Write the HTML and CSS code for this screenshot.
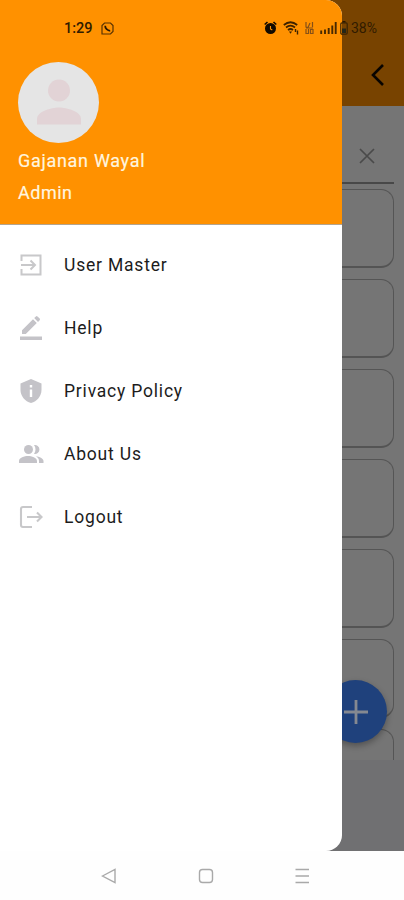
FILE: index.html
```
<!DOCTYPE html>
<html lang="en">
<head>
    <meta charset="UTF-8">
    <meta name="viewport" content="width=device-width, initial-scale=1.0">
    <title>User Master</title>
    <link rel="stylesheet" href="styles.css">
</head>
<body>
<div class="screen">
    <!-- dimmed page behind the drawer -->
    <div class="page">
        <header class="page-header">
            <svg width="16" height="24" viewBox="0 0 16 24"><path d="M13 2L3 12l10 10" fill="none" stroke="#080400" stroke-width="2.6"/></svg>
        </header>
        <div class="search">
            <svg width="16" height="16" viewBox="0 0 16 16"><path d="M1 1l14 14M15 1L1 15" fill="none" stroke="#4a4a4a" stroke-width="1.7"/></svg>
        </div>
        <div class="list">
            <div class="card"></div>
            <div class="card"></div>
            <div class="card"></div>
            <div class="card"></div>
            <div class="card"></div>
            <div class="card"></div>
            <div class="card"></div>
        </div>
        <div class="fab">
            <svg width="24" height="24" viewBox="0 0 24 24"><path d="M12 0v24M0 12h24" stroke="#858991" stroke-width="2.8"/></svg>
        </div>
    </div>

    <aside class="drawer">
        <div class="profile">
            <div class="avatar">
                <svg width="44" height="46" viewBox="0 0 44 46"><circle cx="22" cy="11.500" r="11" fill="#e2d3d6"/><path d="M0 45.500V40c0-7.500 14-11.500 22-11.500S44 32.500 44 40v5.500z" fill="#e2d3d6"/></svg>
            </div>
            <div class="name">Gajanan Wayal</div>
            <div class="role">Admin</div>
        </div>
        <nav class="menu">
            <a class="item">
                <svg class="icon" viewBox="0 0 24 24"><path d="M2.500 8V2.500h19v19h-19V16M2 12h14M11.500 7.500L16 12l-4.500 4.500" fill="none" stroke="#c8c8ca" stroke-width="2"/></svg>
                <span>User Master</span>
            </a>
            <a class="item">
                <svg class="icon" viewBox="0 0 24 24"><path d="M1 20.500h22v3.500H1zM3 14.300L14 3.300l3.800 3.800-11 11H3zM15.200 2.100l1.700-1.700q.8-.7 1.600 0l2.200 2.200q.7.800 0 1.600L19 5.900z"/></svg>
                <span>Help</span>
            </a>
            <a class="item">
                <svg class="icon" viewBox="0 0 24 24"><path d="M12 0L1.500 4.500V11c0 6 4.500 11.500 10.500 13 6-1.500 10.500-7 10.500-13V4.500z"/><path d="M10.800 6h2.400v2.400h-2.400zM10.800 10.500h2.400V18h-2.400z" fill="#fff"/></svg>
                <span>Privacy Policy</span>
            </a>
            <a class="item">
                <svg class="icon" viewBox="0 0 24 24"><circle cx="9.500" cy="7.500" r="4.500"/><path d="M15 3.100a4.500 4.500 0 1 1 0 8.800c2-2.400 2-6.400 0-8.800zM0 21v-2c0-3.300 5.500-5 9-5s9 1.700 9 5v2zM17 14.300c3.300.4 7.500 2 7.500 4.700v2H20v-2c0-2-1.200-3.600-3-4.700z"/></svg>
                <span>About Us</span>
            </a>
            <a class="item">
                <svg class="icon" viewBox="0 0 24 24"><path d="M13 2H4q-2 0-2 2v16q0 2 2 2h9M8 12h14M18 7.500l4.500 4.500-4.500 4.500" fill="none" stroke="#c8c8ca" stroke-width="2.100"/></svg>
                <span>Logout</span>
            </a>
        </nav>
    </aside>

    <div class="status">
        <span class="time">1:29</span>
        <svg class="chat" width="13" height="13" viewBox="0 0 13 13"><path d="M1 12V3.500L3.500 1h6L12 3.500v6L9.500 12z" fill="none" stroke="#593300" stroke-width="1.200"/><path d="M4.200 3.800c-.2 2.500 2.300 5 5 5" fill="none" stroke="#2b1800" stroke-width="1.800"/></svg>
        <svg class="alarm" width="13" height="14" viewBox="0 0 13 14"><circle cx="6.500" cy="7.500" r="5.500" fill="#120a00"/><path d="M.7 3.500L3.500 1M12.300 3.500L9.500 1" stroke="#120a00" stroke-width="1.600"/><path d="M6.500 5v3L8.300 9" fill="none" stroke="#ff9100" stroke-width="1.100"/></svg>
        <svg class="wifi" width="16" height="14" viewBox="0 0 16 14"><path d="M.8 4q6.700-5.500 13.400 0M3 6.500q4.500-3.800 9 0M5 9q2.500-2 5 0" fill="none" stroke="#3c2200" stroke-width="1.700"/><path d="M6 10.500h3l-1.500 2.200z" fill="#3c2200"/><path d="M12.500 8v3M14.500 9.500v4" stroke="#3c2200" stroke-width="1.400"/></svg>
        <svg class="volte" width="9" height="12" viewBox="0 0 9 12"><path d="M1 0v5l2 .5L5 1M7.500 0v5M1 7v4.500h2.500V7M5.500 11.500v-4h2.500v4zM1 6h7" fill="none" stroke="#855017" stroke-width="1.200"/></svg>
        <svg class="signal" width="17" height="12" viewBox="0 0 17 12"><path d="M1.200 12V8.500M5 12V7.500M8.700 12V6M12.300 12V3.500M15.700 12V0" stroke="#472900" stroke-width="1.900"/></svg>
        <svg class="battery" width="8" height="14" viewBox="0 0 8 14"><path d="M2.500 0h3v1.500h-3z" fill="#291700"/><rect x=".8" y="1.800" width="6.400" height="11.400" rx="1.200" fill="none" stroke="#392303" stroke-width="1.200"/><path d="M2 7.500h4V12H2z" fill="#242618"/></svg>
        <span class="percent">38%</span>
    </div>

    <footer class="navbar">
        <svg width="16" height="16" viewBox="0 0 16 16"><path d="M1.500 8L14 1.500v13z"/></svg>
        <svg width="16" height="16" viewBox="0 0 16 16"><rect x="1.500" y="1.500" width="13" height="13" rx="3"/></svg>
        <svg width="16" height="16" viewBox="0 0 16 16"><path d="M1.500 1.500h13.500M1.500 8h13.500M1.500 14.500h13.500"/></svg>
    </footer>
</div>
</body>
</html>
```
FILE: styles.css
```
body {
    margin: 0;
    font-family: Roboto, sans-serif;
    background-color: #fff;
}

.screen {
    position: relative;
    display: flex;
    flex-direction: column;
    width: 404px;
    height: 900px;
    overflow: hidden;
}

.page {
    position: relative;
    height: 851px;
    background-color: #707072;
}

.page-header {
    box-sizing: border-box;
    display: flex;
    justify-content: flex-end;
    height: 106px;
    padding: 63px 18px 0 0;
    background-color: #784300;
}

.search {
    box-sizing: border-box;
    display: flex;
    justify-content: flex-end;
    height: 83px;
    padding: 42px 29px 0 0;
    background: linear-gradient(#484848, #484848) 0 76px / 394px 2px no-repeat #757575;
}

.list {
    box-sizing: border-box;
    display: flex;
    flex-direction: column;
    gap: 11px;
    height: 571px;
    padding: 0 10px;
    overflow: hidden;
    background-color: #757575;
}

.card {
    box-sizing: border-box;
    flex: none;
    height: 79px;
    border: 1px solid #555;
    border-bottom: 2px solid #545454;
    border-radius: 13px;
}

.fab {
    position: absolute;
    top: 680px;
    left: 324px;
    display: flex;
    align-items: center;
    justify-content: center;
    width: 63px;
    height: 63px;
    border-radius: 50%;
    background-color: #1f417c;
    box-shadow: 0 3px 6px rgba(0, 0, 0, 0.3);
}

/* drawer */
.drawer {
    position: absolute;
    top: 0;
    left: 0;
    width: 342px;
    height: 851px;
    overflow: hidden;
    border-radius: 0 16px 16px 0;
    background-color: #fff;
}

.profile {
    box-sizing: border-box;
    height: 225px;
    padding: 62px 18px 0;
    border-bottom: 1px solid #b4a48e;
    background-color: #ff9100;
    color: #fff5df;
    font-size: 18px;
}

.avatar {
    box-sizing: border-box;
    display: flex;
    justify-content: center;
    width: 81px;
    height: 81px;
    padding-top: 17px;
    border-radius: 50%;
    background-color: #e5e5e5;
}

.name, .role {
    height: 32px;
    line-height: 36px;
    letter-spacing: 0.7px;
    -webkit-text-stroke: 0.2px;
}

.role {
    letter-spacing: 0.5px;
}

.menu {
    padding-top: 8px;
}

.item {
    display: flex;
    align-items: center;
    gap: 21px;
    height: 63px;
    padding-left: 19px;
    color: #1c1c1c;
    font-size: 17.5px;
    letter-spacing: 0.8px;
}

.icon {
    width: 24px;
    height: 24px;
    fill: #c4c3c8;
    overflow: visible;
}

/* system bars */
.status {
    position: absolute;
    top: 18px;
    left: 0;
    display: flex;
    align-items: center;
    width: 404px;
    height: 20px;
    color: #301b00;
    font-size: 14.5px;
}

.time {
    width: 28px;
    margin-left: 64px;
    font-weight: 500;
}

.chat {
    margin-left: 9px;
}

.alarm {
    margin-left: 150px;
}

.wifi {
    margin-left: 6px;
}

.volte {
    margin-left: 6px;
}

.signal {
    margin-left: 6px;
}

.battery {
    margin-left: 3px;
}

.percent {
    margin-left: 3px;
    font-size: 14px;
}

.navbar {
    box-sizing: border-box;
    display: flex;
    justify-content: space-between;
    height: 49px;
    padding: 17px 94px 0 101px;
    background-color: #fefefe;
}

.navbar svg {
    fill: none;
    stroke: #a9a9a9;
    stroke-width: 1.4;
}
```
